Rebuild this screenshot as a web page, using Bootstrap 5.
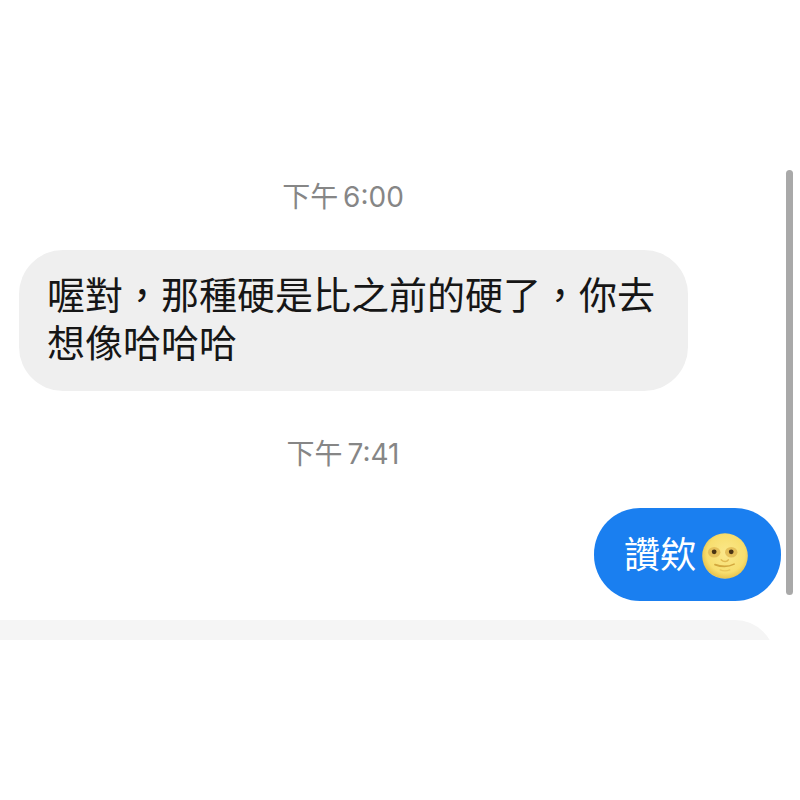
<!DOCTYPE html>
<html lang="zh-Hant">
<head>
    <meta charset="UTF-8">
    <meta name="viewport" content="width=device-width, initial-scale=1.0">
    <title>訊息</title>
    <link href="https://cdn.jsdelivr.net/npm/bootstrap@5.3.0/dist/css/bootstrap.min.css" rel="stylesheet">
    <style>
        html, body {
            height: 800px;
            overflow: hidden;
            background: #fff;
        }
        body {
            font-family: "Liberation Sans", "Noto Sans CJK TC", sans-serif;
        }
        .chat-page {
            position: relative;
            height: 800px;
            padding-top: 176px;
        }
        .chat-time {
            color: #868686;
            font-family: Inter, "Noto Sans CJK TC", sans-serif;
            font-size: 28px;
            line-height: 42px;
            word-spacing: -3px;
            text-align: center;
        }
        .time-first {
            padding-right: 114px;
            margin-bottom: 32px;
        }
        .time-second {
            padding-right: 114px;
            margin-top: 42px;
            margin-bottom: 33px;
        }
        .bubble-in {
            width: 669px;
            height: 141px;
            margin-left: 19px;
            padding: 22px 24px 0 28px;
            background: #efefef;
            border-radius: 44px;
            color: #161616;
            font-size: 38px;
            line-height: 48px;
        }
        .bubble-out {
            height: 93px;
            margin-right: 19px;
            padding: 2px 33px 0 30px;
            background: #1a7ff0;
            border-radius: 46px;
            color: #fff;
            font-size: 36px;
        }
        .moon-emoji {
            width: 46px;
            height: 46px;
            margin-left: 6px;
        }
        .compose-clip {
            height: 20px;
            margin-top: 19px;
            overflow: hidden;
        }
        .compose-strip {
            width: 775px;
            height: 80px;
            background: #f5f5f5;
            border-top-right-radius: 40px;
        }
        .scroll-thumb {
            position: absolute;
            top: 170px;
            left: 786px;
            width: 7px;
            height: 425px;
            background: #a9a9a9;
            border-radius: 4px;
        }
    </style>
</head>
<body>
    <div class="chat-page">
        <div class="chat-time time-first">下午 6:00</div>
        <div class="bubble-in">喔對，那種硬是比之前的硬了，你去<br>想像哈哈哈</div>
        <div class="chat-time time-second">下午 7:41</div>
        <div class="d-flex justify-content-end">
            <div class="bubble-out d-flex align-items-center">
                <span>讚欸</span>
                <svg class="moon-emoji" viewBox="0 0 48 48" aria-hidden="true">
                    <defs>
                        <radialGradient id="moonFill" cx="52%" cy="45%" r="58%">
                            <stop offset="0%" stop-color="#fbe88c"/>
                            <stop offset="72%" stop-color="#f7de6e"/>
                            <stop offset="92%" stop-color="#e9c550"/>
                            <stop offset="100%" stop-color="#f5e7a6"/>
                        </radialGradient>
                    </defs>
                    <circle cx="24" cy="24" r="23.8" fill="url(#moonFill)"/>
                    <ellipse cx="12.700" cy="20" rx="6.500" ry="5.500" fill="#e5c05a"/>
                    <ellipse cx="30.500" cy="20" rx="6.500" ry="5.500" fill="#e5c05a"/>
                    <circle cx="12.700" cy="19.600" r="2.500" fill="#4a3414"/>
                    <circle cx="30.500" cy="19.600" r="2.500" fill="#4a3414"/>
                    <path d="M20 28q2 2 4.500 1.800t3-1.800" fill="none" stroke="#e0b94f" stroke-width="1.500" stroke-linecap="round"/>
                    <path d="M13.500 33q11 4 20 -.5" fill="none" stroke="#d3a83e" stroke-width="1.700" stroke-linecap="round"/>
                    <path d="M19 38.500q5 2 10 0" fill="none" stroke="#e8c658" stroke-width="1.500" stroke-linecap="round"/>
                </svg>
            </div>
        </div>
        <div class="compose-clip">
            <div class="compose-strip"></div>
        </div>
        <div class="scroll-thumb"></div>
    </div>
    <script src="https://cdn.jsdelivr.net/npm/bootstrap@5.3.0/dist/js/bootstrap.bundle.min.js"></script>
</body>
</html>
